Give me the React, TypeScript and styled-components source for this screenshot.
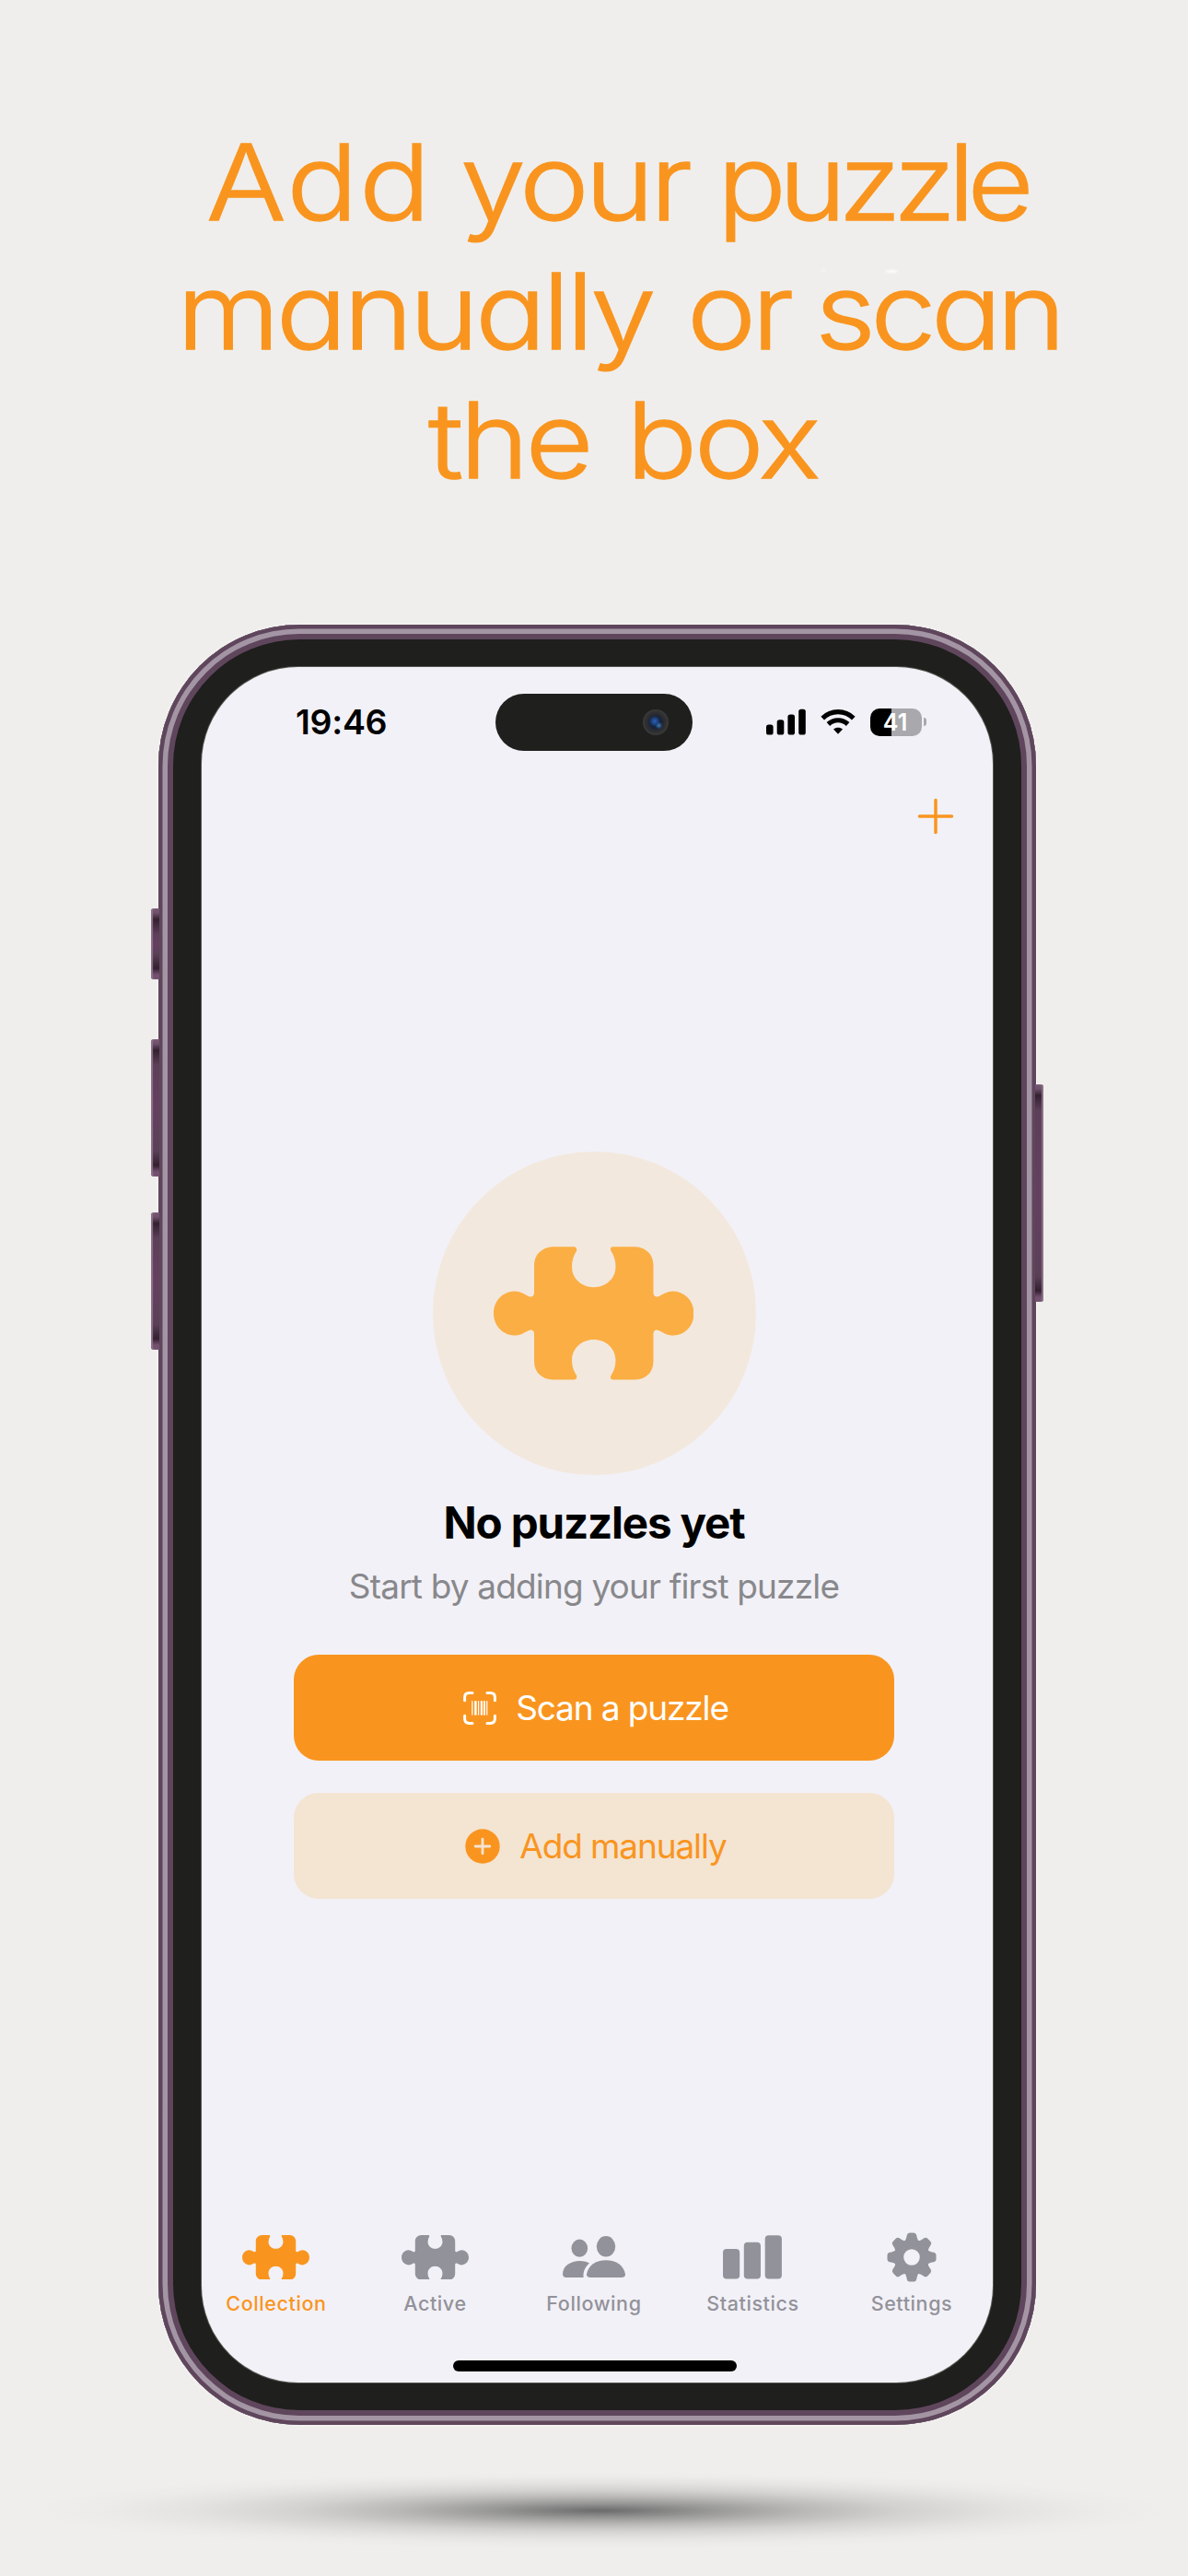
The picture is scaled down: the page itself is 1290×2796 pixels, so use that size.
import React from "react";
import styled, { createGlobalStyle } from "styled-components";

const ORANGE = "#f9951f";
const GREY = "#92929a";

const GlobalStyle = createGlobalStyle`
  *, *::before, *::after { box-sizing: border-box; }
  html, body { margin: 0; padding: 0; }
  body {
    background: #efeeec;
    font-family: Inter, "Liberation Sans", sans-serif;
  }
  h1, h2, p { margin: 0; font-weight: inherit; }
  svg { display: block; }
`;

const Poster = styled.main`
  position: relative;
  display: flex;
  flex-direction: column;
  width: 1290px;
  height: 2796px;
  padding-top: 128px;
  overflow: hidden;
  background: #efeeec;
`;

const Headline = styled.h1`
  display: flex;
  flex-direction: column;
  height: 550px;
  color: ${ORANGE};
  font-size: 114px;
  font-weight: 300;
  line-height: 140px;
  font-feature-settings: "cv11" 1;
  -webkit-text-stroke: 1.4px ${ORANGE};
`;

const HeadlineRow = styled.span<{ $start: number; $gap: number }>`
  display: flex;
  height: 140px;
  padding-left: ${(p) => p.$start}px;
  gap: ${(p) => p.$gap}px;
`;

const Word = styled.span<{ $width: number; $tracking: number; $stretch: number }>`
  width: ${(p) => p.$width}px;
  letter-spacing: ${(p) => p.$tracking}px;
  white-space: nowrap;
  transform: scaleX(${(p) => p.$stretch});
  transform-origin: left center;
`;

const Glint = styled.i<{ $x: number; $y: number; $w: number; $strength: number }>`
  position: absolute;
  left: ${(p) => p.$x}px;
  top: ${(p) => p.$y}px;
  width: ${(p) => p.$w}px;
  height: 3px;
  border-radius: 50%;
  background: #fff;
  opacity: ${(p) => p.$strength};
  filter: blur(0.8px);
`;

const Phone = styled.section`
  position: relative;
  display: flex;
  width: 953px;
  height: 1954px;
  margin-left: 172px;
  padding: 46px 47px;
  border-radius: 153px;
  background: #1f1f1d;
  box-shadow:
    inset 0 0 0 4.5px #5f465c,
    inset 0 0 0 10px #a495a5,
    inset 0 0 0 16px #5f465c,
    0 0 2px 1px #f7f6f5;
`;

const SideButton = styled.i<{ $side: "left" | "right"; $top: number; $height: number }>`
  position: absolute;
  ${(p) => p.$side}: -8px;
  top: ${(p) => p.$top}px;
  width: 9px;
  height: ${(p) => p.$height}px;
  border-radius: ${(p) => (p.$side === "left" ? "3px 0 0 3px" : "0 3px 3px 0")};
  background: linear-gradient(
    #7a5a76 0,
    #6d5069 5px,
    #33202f 12px,
    #5c3f58 28px,
    #653f60 50%,
    #5a4057 calc(100% - 28px),
    #33202f calc(100% - 12px),
    #74506f calc(100% - 5px),
    #74506f 100%
  );
  box-shadow: inset ${(p) => (p.$side === "left" ? "2px" : "-2px")} 0 1px #8b7388;
`;

const Screen = styled.div`
  position: relative;
  display: flex;
  flex-direction: column;
  width: 859px;
  border-radius: 105px;
  background: #f2f1f7;
  box-shadow: 0 0 0 1px #55544f;
`;

const Island = styled.div`
  position: absolute;
  left: 319px;
  top: 28.5px;
  display: flex;
  align-items: center;
  justify-content: flex-end;
  width: 214px;
  height: 62.5px;
  padding-right: 26px;
  border-radius: 32px;
  background: #1f1f1d;
`;

const Lens = styled.i`
  width: 28px;
  height: 28px;
  border-radius: 50%;
  background:
    radial-gradient(circle at 46% 46%, #2b62b4 0, rgba(32, 72, 140, 0.9) 3px, rgba(20, 40, 80, 0) 6px),
    radial-gradient(circle at 62% 62%, #3c7fc0 0, rgba(40, 90, 150, 0) 4px),
    radial-gradient(circle, #14233f 0, #16233b 6px, #2a2b30 9px, #333335 12px, #3c3c3d 14px);
`;

const StatusBar = styled.header`
  display: flex;
  align-items: center;
  height: 119px;
  padding: 0 77px 0 102px;
`;

const Clock = styled.span`
  flex: 1;
  color: #000;
  font-size: 37.5px;
  font-weight: 600;
  letter-spacing: -0.3px;
  line-height: 40px;
`;

const StatusIcons = styled.div`
  display: flex;
  align-items: center;
  gap: 16px;
`;

const Battery = styled.div`
  position: relative;
  display: flex;
  align-items: center;
  justify-content: center;
  width: 56px;
  height: 30px;
  padding-right: 2px;
  border-radius: 10px;
  background: linear-gradient(90deg, #000 0 23px, #a8a8ad 23px);
  color: #fff;
  font-size: 25px;
  font-weight: 600;
  line-height: 30px;

  &::after {
    content: "";
    position: absolute;
    right: -5px;
    top: 10.5px;
    width: 3.5px;
    height: 9px;
    border-radius: 0 4px 4px 0;
    background: #a8a8ad;
  }
`;

const Toolbar = styled.div`
  display: flex;
  align-items: center;
  justify-content: flex-end;
  height: 86px;
  padding-right: 42.5px;
`;

const EmptyState = styled.div`
  display: flex;
  flex: 1;
  flex-direction: column;
  align-items: center;
  padding: 321px 7px 0 0;
`;

const Disc = styled.div`
  display: flex;
  align-items: center;
  justify-content: center;
  width: 351px;
  height: 351px;
  padding-right: 1px;
  border-radius: 50%;
  background: #f3e8dd;
`;

const Title = styled.h2`
  margin-top: 21.5px;
  color: #000;
  font-size: 47.5px;
  font-weight: 700;
  letter-spacing: -1.15px;
  line-height: 60px;
`;

const Subtitle = styled.p`
  margin-top: 16px;
  color: #88888c;
  font-size: 37px;
  letter-spacing: -0.84px;
  line-height: 46px;
`;

const Actions = styled.div`
  display: flex;
  flex-direction: column;
  gap: 35px;
  margin-top: 51.5px;
`;

const ActionButton = styled.button<{ $primary?: boolean }>`
  display: flex;
  align-items: center;
  justify-content: center;
  gap: 21px;
  width: 652px;
  height: 115px;
  padding: 0 0 0 4px;
  border: 0;
  border-radius: 27px;
  background: ${(p) => (p.$primary ? ORANGE : "#f4e4d2")};
  color: ${(p) => (p.$primary ? "#fff" : ORANGE)};
  font: 400 37px/46px Inter, "Liberation Sans", sans-serif;
  letter-spacing: -1.13px;
`;

const TabBar = styled.nav`
  display: grid;
  grid-template-columns: repeat(5, 172.5px);
  width: 862.5px;
  margin-left: -5.3px;
`;

const Tab = styled.a<{ $active?: boolean }>`
  display: flex;
  flex-direction: column;
  align-items: center;
  gap: 5.5px;
  color: ${(p) => (p.$active ? ORANGE : GREY)};
`;

const TabIcon = styled.span`
  display: flex;
  align-items: center;
  justify-content: center;
  height: 60px;
`;

const TabLabel = styled.span`
  font-size: 21.5px;
  font-weight: 500;
  letter-spacing: 0.6px;
  line-height: 28px;
`;

const HomeIndicator = styled.div`
  width: 308px;
  height: 11.5px;
  margin: 48.5px 0 12.5px 272.5px;
  border-radius: 6px;
  background: #000;
`;

const FloorShadow = styled.div`
  width: 1240px;
  height: 84px;
  margin: 51px 0 0 32px;
  background: radial-gradient(
    closest-side,
    #6b6b6b 0%,
    #7e7e7e 8%,
    #9a9a99 20%,
    #bab9b8 36%,
    #d3d2d1 53%,
    #e4e3e2 72%,
    #ecebea 87%,
    rgba(239, 238, 236, 0) 100%
  );
`;

function PuzzleIcon({ width, color }: { width: number; color: string }) {
  return (
    <svg width={width} height={(width * 434) / 652} viewBox="257 369.5 652 434" fill={color}>
      <path d="M450 370H519Q529 371 527 384Q511 407 512 437C512 473 543 502 583 502C623 502 654 473 654 437Q655 407 639 384Q634 372 645 370H718C754 372 777 396 777 430V522Q779 536 794 532C810 525 820 515 843 515C880 517 909 547 909 587C909 627 880 657 843 659C820 659 810 649 794 642Q779 638 777 652V743C777 778 754 802 718 803H645Q634 801 639 789Q655 767 654 738C654 701 623 672 583 672C543 672 512 701 512 738Q511 767 527 789Q530 801 519 803H450C413 802 389 778 389 743V652Q387 638 372 642C356 649 346 659 323 659C286 657 257 627 257 587C257 547 286 517 323 515C346 515 356 525 372 532Q387 536 389 522V430C389 396 413 372 450 370Z" />
    </svg>
  );
}

function SignalIcon() {
  return (
    <svg width="43" height="29" viewBox="0 0 43 29" fill="#000">
      <rect x="0" y="17.5" width="7.6" height="11" rx="2.6" />
      <rect x="11.7" y="12.3" width="7.6" height="16.2" rx="2.6" />
      <rect x="23.4" y="6.5" width="7.6" height="22" rx="2.6" />
      <rect x="35.2" y="0.7" width="7.6" height="27.8" rx="2.6" />
    </svg>
  );
}

function WifiIcon() {
  return (
    <svg width="38" height="29" viewBox="0 0 38 29" fill="none" stroke="#000" strokeWidth="5.2">
      <path d="M2.2 10.6C11.6 1.4 26.4 1.4 35.8 10.6" />
      <path d="M8.4 17C14.4 11.3 23.6 11.3 29.6 17" />
      <path d="M14 22.6C16.8 20.2 21.2 20.2 24 22.6L19 27.8Z" fill="#000" stroke="none" />
    </svg>
  );
}

function PlusIcon() {
  return (
    <svg width="40" height="40" viewBox="0 0 40 40" fill="none" stroke={ORANGE} strokeWidth="3.5" strokeLinecap="round">
      <path d="M20 2.5V37.5M2.5 20H37.5" />
    </svg>
  );
}

function ScanIcon() {
  return (
    <svg width="36" height="36" viewBox="0 0 36 36" fill="none" stroke="#fff" strokeWidth="3" strokeLinecap="round">
      <path d="M1.6 9.8V6.4Q1.6 1.6 6.4 1.6H10M26 1.6H29.6Q34.4 1.6 34.4 6.4V9.8M34.4 26.2V29.6Q34.4 34.4 29.6 34.4H26M10 34.4H6.4Q1.6 34.4 1.6 29.6V26.2" />
      <g fill="#fff" stroke="none">
        <rect x="9.2" y="10.2" width="1.3" height="15.4" />
        <rect x="12.2" y="10.2" width="2.4" height="15.4" />
        <rect x="16" y="10.2" width="1.2" height="15.4" />
        <rect x="18.8" y="10.2" width="2.2" height="15.4" />
        <rect x="22" y="10.2" width="2" height="15.4" />
        <rect x="25.2" y="10.2" width="1.2" height="15.4" />
      </g>
    </svg>
  );
}

function PlusCircleIcon() {
  return (
    <svg width="38" height="38" viewBox="0 0 38 38">
      <circle cx="19" cy="19" r="18.7" fill={ORANGE} />
      <path d="M19 11.2V26.8M11.2 19H26.8" fill="none" stroke="#f4e4d2" strokeWidth="2.8" strokeLinecap="round" />
    </svg>
  );
}

function FollowingIcon() {
  return (
    <svg width="68" height="46" viewBox="0 0 68 46" fill={GREY}>
      <ellipse cx="18.3" cy="13.2" rx="8.8" ry="9.6" />
      <ellipse cx="47" cy="11.3" rx="10.2" ry="11.2" />
      <path d="M3.6 45H22.6C21.9 38.5 24.5 33.3 29 29.4C17 23.6 0 29 0 41.4Q0.2 44.8 3.6 45Z" />
      <path d="M29.6 45H64.4Q68 44.8 68 41.6C66.5 32 58 26.2 47 26.2C36 26.2 27.5 32 26 41.6Q26 44.8 29.6 45Z" />
    </svg>
  );
}

function StatisticsIcon() {
  return (
    <svg width="64" height="48" viewBox="0 0 64 48" fill={GREY}>
      <rect x="0" y="15" width="18.2" height="32.5" rx="4" />
      <rect x="22.8" y="7.7" width="18.2" height="39.8" rx="4" />
      <rect x="45.7" y="0.3" width="18.2" height="47.2" rx="4" />
    </svg>
  );
}

function SettingsIcon() {
  return (
    <svg width="54" height="54" viewBox="-27 -27 54 54" fill={GREY}>
      <circle r="14" fill="none" stroke={GREY} strokeWidth="10.4" />
      {[0, 45, 90, 135, 180, 225, 270, 315].map((angle) => (
        <path
          key={angle}
          transform={`rotate(${angle})`}
          d="M-8.5 -16.5Q-6.2 -18.5 -5.6 -22L-5.2 -24Q-4.6 -26.5 -2.4 -26.5H2.4Q4.6 -26.5 5.2 -24L5.6 -22Q6.2 -18.5 8.5 -16.5Z"
        />
      ))}
    </svg>
  );
}

const tabs = [
  { label: "Collection", icon: <PuzzleIcon width={73} color={ORANGE} />, active: true },
  { label: "Active", icon: <PuzzleIcon width={73} color={GREY} /> },
  { label: "Following", icon: <FollowingIcon /> },
  { label: "Statistics", icon: <StatisticsIcon /> },
  { label: "Settings", icon: <SettingsIcon /> },
];

interface HeadlineWord {
  text: string;
  width: number;
  tracking: number;
  stretch: number;
}

const headline: { start: number; gap: number; words: HeadlineWord[] }[] = [
  {
    start: 224,
    gap: 42,
    words: [
      { text: "Add", width: 234, tracking: 1, stretch: 1.13 },
      { text: "your", width: 237, tracking: -4, stretch: 1.12 },
      { text: "puzzle", width: 334, tracking: -7.4, stretch: 1.09 },
    ],
  },
  {
    start: 192,
    gap: 36,
    words: [
      { text: "manually", width: 518, tracking: -3.6, stretch: 1.125 },
      { text: "or", width: 103, tracking: -4, stretch: 1.11 },
      { text: "scan", width: 265, tracking: -5, stretch: 1.12 },
    ],
  },
  {
    start: 465,
    gap: 42,
    words: [
      { text: "the", width: 172.5, tracking: -3.5, stretch: 1.12 },
      { text: "box", width: 204, tracking: -3, stretch: 1.125 },
    ],
  },
];

export default function App() {
  return (
    <Poster>
      <GlobalStyle />
      <Headline>
        {headline.map((row) => (
          <HeadlineRow key={row.start} $start={row.start} $gap={row.gap}>
            {row.words.map((word) => (
              <Word key={word.text} $width={word.width} $tracking={word.tracking} $stretch={word.stretch}>
                {word.text}
              </Word>
            ))}
          </HeadlineRow>
        ))}
      </Headline>
      <Glint $x={891} $y={292} $w={6} $strength={0.4} />
      <Glint $x={961} $y={293} $w={14} $strength={0.9} />

      <Phone>
        <SideButton $side="left" $top={308} $height={77} />
        <SideButton $side="left" $top={450} $height={149} />
        <SideButton $side="left" $top={637.5} $height={149} />
        <SideButton $side="right" $top={499} $height={236} />
        <Screen>
          <StatusBar>
            <Clock>19:46</Clock>
            <StatusIcons>
              <SignalIcon />
              <WifiIcon />
              <Battery>41</Battery>
            </StatusIcons>
          </StatusBar>
          <Island>
            <Lens />
          </Island>
          <Toolbar>
            <PlusIcon />
          </Toolbar>
          <EmptyState>
            <Disc>
              <PuzzleIcon width={217.5} color="#fbae43" />
            </Disc>
            <Title>No puzzles yet</Title>
            <Subtitle>Start by adding your first puzzle</Subtitle>
            <Actions>
              <ActionButton $primary>
                <ScanIcon />
                Scan a puzzle
              </ActionButton>
              <ActionButton>
                <PlusCircleIcon />
                Add manually
              </ActionButton>
            </Actions>
          </EmptyState>
          <TabBar>
            {tabs.map((tab) => (
              <Tab key={tab.label} $active={tab.active}>
                <TabIcon>{tab.icon}</TabIcon>
                <TabLabel>{tab.label}</TabLabel>
              </Tab>
            ))}
          </TabBar>
          <HomeIndicator />
        </Screen>
      </Phone>
      <FloorShadow />
    </Poster>
  );
}
